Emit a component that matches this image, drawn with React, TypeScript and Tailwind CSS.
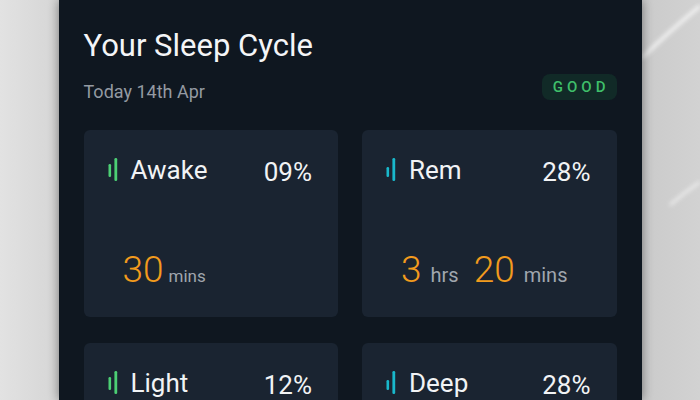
import React from "react";

type Stage = {
  name: string;
  percent: string;
  tone: "green" | "cyan";
  parts: { value: string; unit: string }[];
  unitSize: "sm" | "lg";
};

const stages: Stage[] = [
  { name: "Awake", percent: "09%", tone: "green", parts: [{ value: "30", unit: "mins" }], unitSize: "sm" },
  {
    name: "Rem",
    percent: "28%",
    tone: "cyan",
    parts: [
      { value: "3", unit: "hrs" },
      { value: "20", unit: "mins" },
    ],
    unitSize: "lg",
  },
  {
    name: "Light",
    percent: "12%",
    tone: "green",
    parts: [{ value: "1", unit: "hrs" }, { value: "25", unit: "mins" }],
    unitSize: "lg",
  },
  {
    name: "Deep",
    percent: "28%",
    tone: "cyan",
    parts: [{ value: "3", unit: "hrs" }, { value: "20", unit: "mins" }],
    unitSize: "lg",
  },
];

function Bars({ tone }: { tone: "green" | "cyan" }) {
  const color = tone === "green" ? "#4ccf74" : "#19b8cb";
  return (
    <svg width="10" height="24" viewBox="0 0 10 24" className="shrink-0">
      <rect x="0.5" y={tone === "green" ? 6 : 9} width="2.6" height={tone === "green" ? 13 : 10} rx="1.2" fill={color} />
      <rect x="6.4" y="0" width="2.8" height="23" rx="1.3" fill={color} />
    </svg>
  );
}

function StageCard({ stage }: { stage: Stage }) {
  const unitClass =
    stage.unitSize === "sm" ? "text-[17px] ml-[5px]" : "text-[20px] ml-[9px]";
  return (
    <div className="h-[187px] rounded-[6px] bg-[#1a2431] pl-[24px] pr-[26px] pt-[24px]">
      <div className="flex h-[32px] items-center">
        <Bars tone={stage.tone} />
        <span className="ml-[13px] text-[26px] leading-[32px] text-[#f1f3f5]">{stage.name}</span>
        <span className="ml-auto mt-[4px] text-[26px] leading-[32px] text-[#f1f3f5]">{stage.percent}</span>
      </div>
      <div className="mt-[64px] flex items-baseline pl-[15px]">
        {stage.parts.map((p, i) => (
          <React.Fragment key={i}>
            <span className={`text-[37px] font-light leading-[40px] text-[#f29b1d] ${i > 0 ? "ml-[15px]" : ""}`}>
              {p.value}
            </span>
            <span className={`${unitClass} text-[#a0a6ae]`}>{p.unit}</span>
          </React.Fragment>
        ))}
      </div>
    </div>
  );
}

export default function App() {
  return (
    <div
      className="relative flex h-[400px] w-[700px] justify-center overflow-hidden bg-[linear-gradient(90deg,#e2e2e2_0%,#d6d6d6_8%,#cfcfcf_50%,#cbcbcb_92%,#d2d2d2_100%)]"
      style={{ fontFamily: "Roboto, 'Noto Sans', sans-serif" }}
    >
      <svg className="pointer-events-none absolute right-0 top-0" width="60" height="400" viewBox="0 0 60 400">
        <defs>
          <filter id="blur" x="-50%" y="-50%" width="200%" height="200%">
            <feGaussianBlur stdDeviation="2.2" />
          </filter>
        </defs>
        <path d="M2 58 Q 25 35 60 6" stroke="#ffffff" strokeWidth="3" fill="none" filter="url(#blur)" opacity="0.85" />
        <path d="M30 205 Q 45 192 60 182" stroke="#ffffff" strokeWidth="2.5" fill="none" filter="url(#blur)" opacity="0.7" />
      </svg>
      <div className="relative h-[400px] w-[583px] bg-[#0f1720] px-[25px] shadow-[0_0_10px_rgba(0,0,0,0.45)]">
        <h1 className="pt-[28px] text-[31px] font-normal leading-[36px] text-[#f4f5f7]">Your Sleep Cycle</h1>
        <div className="mt-[10px] flex items-start justify-between">
          <p className="mt-[6px] text-[18px] leading-[24px] text-[#949aa2]">Today 14th Apr</p>
          <span className="flex h-[26px] items-center rounded-[8px] bg-[#112a27] pl-[11px] pr-[7px] text-[15px] font-medium tracking-[4px] text-[#3fbf6a]">
            GOOD
          </span>
        </div>
        <div className="mt-[26px] grid grid-cols-2 gap-x-[24px] gap-y-[26px]">
          {stages.map((s) => (
            <StageCard key={s.name} stage={s} />
          ))}
        </div>
      </div>
    </div>
  );
}
